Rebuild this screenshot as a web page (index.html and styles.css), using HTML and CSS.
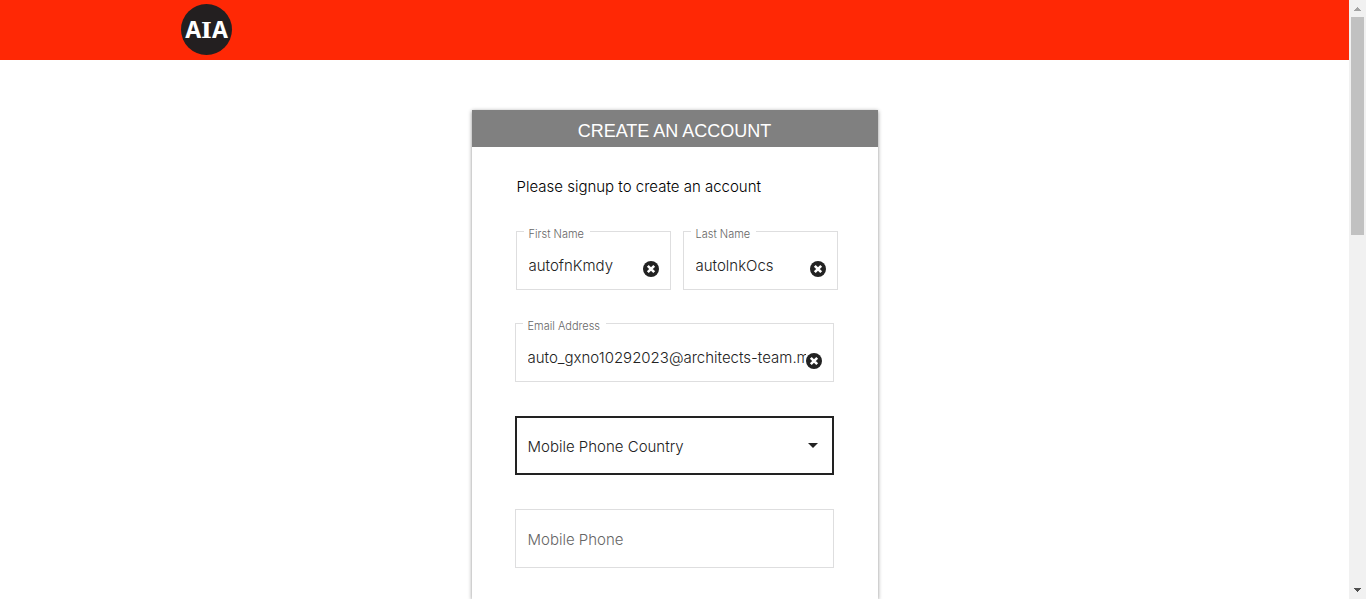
FILE: index.html
```html
<!DOCTYPE html>
<html lang="en">
<head>
<meta charset="utf-8">
<meta name="viewport" content="width=device-width, initial-scale=1">
<title>Create an Account</title>
<link rel="stylesheet" href="styles.css">
</head>
<body>
<div class="page">
  <header class="topbar">
    <a class="logo" href="#" aria-label="AIA home"><span>A</span><span class="logo-serif">I</span><span>A</span></a>
  </header>
  <main class="content">
    <section class="card">
      <h1 class="card-title">CREATE AN ACCOUNT</h1>
      <form class="form">
        <p class="intro">Please signup to create an account</p>
        <div class="name-row">
          <div class="field">
            <label class="field-label" for="first">First Name</label>
            <input class="field-input" id="first" type="text" value="autofnKmdy">
            <button class="clear" type="button" aria-label="Clear first name"><svg viewBox="0 0 16 16"><circle cx="8" cy="8" r="8"/><path d="M4.8 4.8l6.4 6.4M11.2 4.8l-6.4 6.4"/></svg></button>
          </div>
          <div class="field">
            <label class="field-label" for="last">Last Name</label>
            <input class="field-input" id="last" type="text" value="autolnkOcs">
            <button class="clear" type="button" aria-label="Clear last name"><svg viewBox="0 0 16 16"><circle cx="8" cy="8" r="8"/><path d="M4.8 4.8l6.4 6.4M11.2 4.8l-6.4 6.4"/></svg></button>
          </div>
        </div>
        <div class="field">
          <label class="field-label" for="email">Email Address</label>
          <input class="field-input" id="email" type="text" value="auto_gxno10292023@architects-team.me">
          <button class="clear" type="button" aria-label="Clear email"><svg viewBox="0 0 16 16"><circle cx="8" cy="8" r="8"/><path d="M4.8 4.8l6.4 6.4M11.2 4.8l-6.4 6.4"/></svg></button>
        </div>
        <div class="field field-active">
          <select class="field-select" aria-label="Mobile Phone Country"><option>Mobile Phone Country</option></select>
          <svg class="caret" viewBox="0 0 10 5"><path d="M0 0h10L5 5z"/></svg>
        </div>
        <div class="field">
          <input class="field-input field-phone" type="tel" placeholder="Mobile Phone" aria-label="Mobile Phone">
        </div>
      </form>
    </section>
  </main>
</div>
<div class="scrollbar" aria-hidden="true">
  <svg class="arrow arrow-up" viewBox="0 0 7 4"><path d="M3 0h1v1h1v1h1v1h1v1H0V3h1V2h1V1h1z"/></svg>
  <div class="track"><div class="thumb"></div></div>
  <svg class="arrow" viewBox="0 0 7 4"><path d="M0 0h7v1H6v1H5v1H4v1H3V3H2V2H1V1H0z"/></svg>
</div>
</body>
</html>
```
FILE: styles.css
```css
* { box-sizing: border-box; }

body {
  margin: 0;
  display: flex;
  height: 100vh;
  overflow: hidden;
  background: #fff;
  color: #000;
  font-family: Inter, "Liberation Sans", sans-serif;
  font-weight: 300;
  font-size: 15px;
}

.page {
  flex: 1;
  min-width: 0;
  display: flex;
  flex-direction: column;
}

.topbar {
  flex: none;
  height: 60px;
  padding: 4px 181px;
  background: #ff2805;
}

.logo {
  width: 51px;
  height: 51px;
  padding-bottom: 1px;
  border-radius: 50%;
  background: #231f20;
  color: #fff;
  display: flex;
  align-items: center;
  justify-content: center;
  font: 700 23px/1 "Noto Sans", sans-serif;
  text-decoration: none;
}

.logo-serif { font-family: "DejaVu Serif", serif; }

.content {
  flex: 1;
  min-height: 0;
  display: flex;
  justify-content: center;
  padding: 50px 16px 0;
}

.card {
  width: 100%;
  max-width: 406px;
  min-height: 100%;
  background: #fff;
  box-shadow: 0 1px 4px rgba(0, 0, 0, 0.45);
}

.card-title {
  margin: 0;
  padding: 4px 0 1px;
  background: #808080;
  color: #fff;
  font-family: "Liberation Sans", sans-serif;
  font-size: 18px;
  font-weight: 400;
  line-height: 32px;
  min-height: 37px;
  padding-top: 5px;
  padding-bottom: 0;
  text-align: center;
}

.form { padding: 28px 44px 31px 43px; }

.intro {
  margin: 0 2px 32px;
  line-height: 24px;
}

.name-row {
  display: grid;
  grid-template-columns: 1fr 1fr;
  gap: 12px;
  margin: 0 -4px 33px 1px;
}

.field {
  position: relative;
  height: 59px;
  border: 1px solid #dededf;
}

.form > .field { margin-bottom: 34px; }
.form > .field:last-child { margin-bottom: 0; }

.field-active { border: 2px solid #222; }

.field-label {
  position: absolute;
  top: -6px;
  left: 7px;
  padding: 0 6px 0 5px;
  background: #fff;
  color: #666;
  font-size: 11px;
  line-height: 16px;
}

.field-input,
.field-select {
  display: block;
  width: 100%;
  height: 100%;
  border: 0;
  outline: 0;
  background: none;
  color: #222;
  font: inherit;
}

.field-input { padding: 10px 27px 0 12px; }

.field-input::placeholder { color: #666; opacity: 1; }

.field-phone { padding-top: 1px; }

.field-select {
  appearance: none;
  padding: 1px 24px 0 11px;
}

.clear {
  position: absolute;
  right: 11px;
  top: 29px;
  width: 16px;
  height: 16px;
  padding: 0;
  border: 0;
  background: none;
}

.clear svg { display: block; fill: #222; }
.clear path { stroke: #fff; stroke-width: 2.6; }

.caret {
  position: absolute;
  right: 14px;
  top: 25px;
  width: 10px;
  height: 5px;
  fill: #222;
  pointer-events: none;
}

.scrollbar {
  flex: none;
  width: 17px;
  display: flex;
  flex-direction: column;
  align-items: center;
  padding: 7px 2px;
  background: #f1f1f1;
}

.arrow { width: 7px; height: 4px; fill: #505050; }
.arrow-up { fill: #a3a3a3; }

.track { flex: 1; width: 13px; padding: 6px 0; }
.thumb { height: 38.6%; background: #c1c1c1; }
```
